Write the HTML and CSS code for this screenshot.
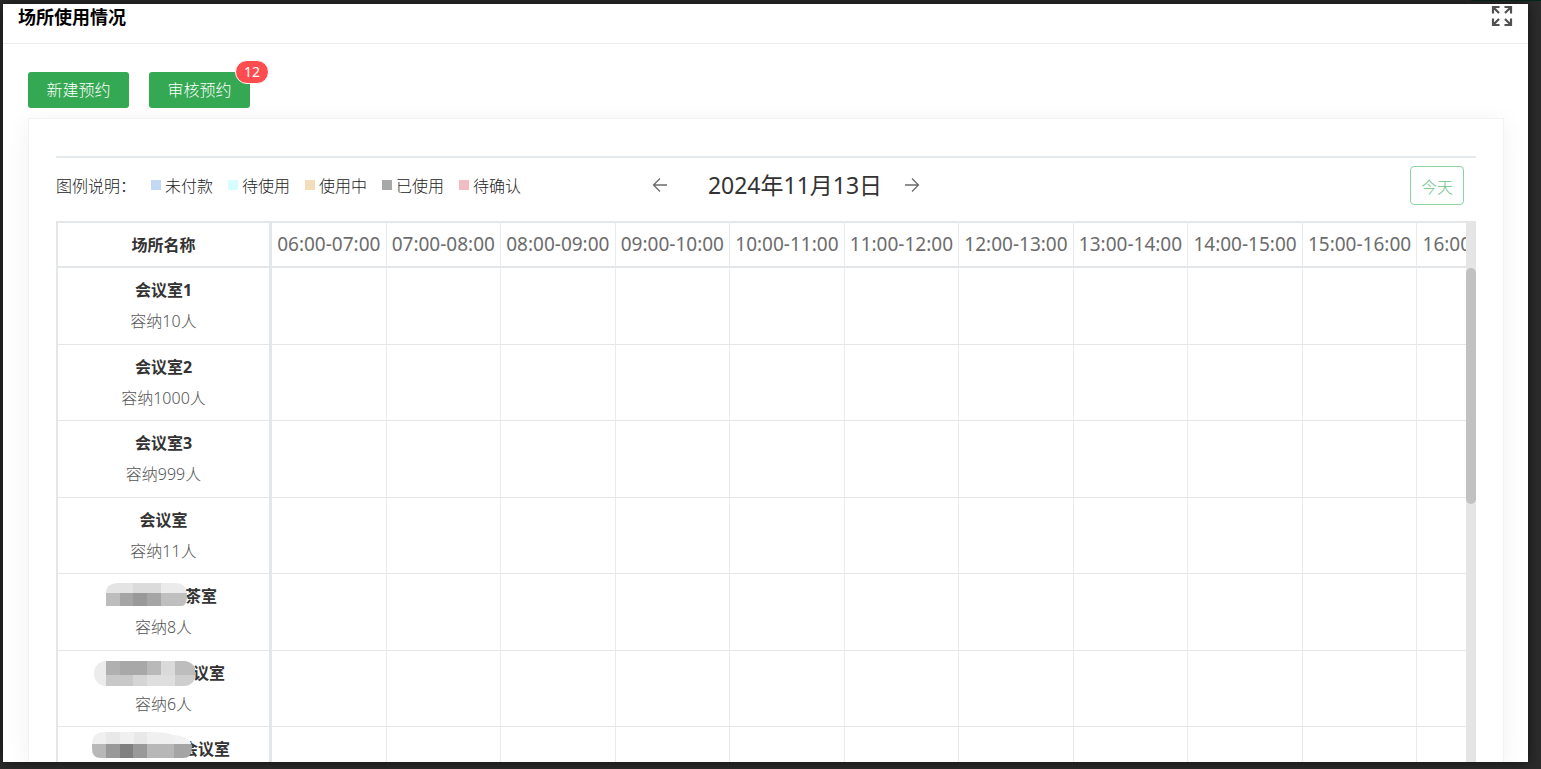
FILE: index.html
```html
<!DOCTYPE html>
<html lang="zh-CN">
<head>
<meta charset="utf-8">
<title>场所使用情况</title>
<link rel="stylesheet" href="styles.css">
</head>
<body>
<main class="dialog">
  <header class="dialog-head">
    <h1 class="dialog-title">场所使用情况</h1>
    <button class="icon-btn" type="button" aria-label="全屏">
      <svg width="22" height="22" viewBox="0 0 22 22" fill="none" stroke="#505050" stroke-width="2.2">
        <path d="M8.500 2H2V8.500M2 2L8 8M13.500 2H20V8.500M20 2L14 8M8.500 20H2V13.500M2 20L8 14M13.500 20H20V13.500M20 20L14 14"/>
      </svg>
    </button>
  </header>
  <div class="content">
    <div class="actions">
      <button class="btn" type="button">新建预约</button>
      <button class="btn" type="button">审核预约<span class="badge">12</span></button>
    </div>
    <section class="card">
      <div class="toolbar">
        <div class="legend">
          <span class="legend-label">图例说明：</span>
          <span class="legend-item"><i class="swatch unpaid"></i>未付款</span>
          <span class="legend-item"><i class="swatch pending"></i>待使用</span>
          <span class="legend-item"><i class="swatch active"></i>使用中</span>
          <span class="legend-item"><i class="swatch used"></i>已使用</span>
          <span class="legend-item"><i class="swatch confirm"></i>待确认</span>
        </div>
        <div class="date-nav">
          <button class="icon-btn" type="button" aria-label="前一天">
            <svg width="16" height="16" viewBox="0 0 16 16" fill="none" stroke="#6b6b6b" stroke-width="1.3"><path d="M15 8H2M8 1.5L1.5 8L8 14.5"/></svg>
          </button>
          <time class="date" datetime="2024-11-13">2024年11月13日</time>
          <button class="icon-btn" type="button" aria-label="后一天">
            <svg width="16" height="16" viewBox="0 0 16 16" fill="none" stroke="#6b6b6b" stroke-width="1.3"><path d="M1 8H14M8 1.5L14.5 8L8 14.5"/></svg>
          </button>
        </div>
        <button class="today" type="button">今天</button>
      </div>
      <div class="schedule">
        <div class="viewport">
          <table class="grid">
            <colgroup><col class="name-col"><col span="11"></colgroup>
            <thead>
              <tr><th scope="col">场所名称</th><th scope="col">06:00-07:00</th><th scope="col">07:00-08:00</th><th scope="col">08:00-09:00</th><th scope="col">09:00-10:00</th><th scope="col">10:00-11:00</th><th scope="col">11:00-12:00</th><th scope="col">12:00-13:00</th><th scope="col">13:00-14:00</th><th scope="col">14:00-15:00</th><th scope="col">15:00-16:00</th><th scope="col">16:00-17:00</th></tr>
            </thead>
            <tbody>
              <tr><th scope="row"><div class="room">会议室1</div><div class="capacity">容纳10人</div></th><td></td><td></td><td></td><td></td><td></td><td></td><td></td><td></td><td></td><td></td><td></td></tr>
              <tr><th scope="row"><div class="room">会议室2</div><div class="capacity">容纳1000人</div></th><td></td><td></td><td></td><td></td><td></td><td></td><td></td><td></td><td></td><td></td><td></td></tr>
              <tr><th scope="row"><div class="room">会议室3</div><div class="capacity">容纳999人</div></th><td></td><td></td><td></td><td></td><td></td><td></td><td></td><td></td><td></td><td></td><td></td></tr>
              <tr><th scope="row"><div class="room">会议室</div><div class="capacity">容纳11人</div></th><td></td><td></td><td></td><td></td><td></td><td></td><td></td><td></td><td></td><td></td><td></td></tr>
              <tr><th scope="row"><div class="room"><svg class="mask mask-a" width="82" height="31" viewBox="0 0 82 31">
                <clipPath id="clip-a"><path d="M1 25V12Q1 2 14 2H70Q82 2 82 15Q82 25 76 25Z"/></clipPath>
                <g clip-path="url(#clip-a)"><path fill="#e4e4e4" d="M0 2h28v10H0z"/><path fill="#dbdbdb" d="M28 2h28v10H28z"/><path fill="#ebebeb" d="M56 2h26v10H56z"/><path fill="#bdbdbd" d="M0 12h15v13H0z"/><path fill="#a5a5a5" d="M15 12h13v13H15z"/><path fill="#999" d="M28 12h14v13H28z"/><path fill="#a5a5a5" d="M42 12h14v13H42z"/><path fill="#bfbfbf" d="M56 12h26v13H56z"/></g></svg>茶室</div><div class="capacity">容纳8人</div></th><td></td><td></td><td></td><td></td><td></td><td></td><td></td><td></td><td></td><td></td><td></td></tr>
              <tr><th scope="row"><div class="room"><svg class="mask mask-b" width="101" height="31" viewBox="0 0 101 31">
                <clipPath id="clip-b"><rect y="3" width="102" height="25" rx="12"/></clipPath>
                <g clip-path="url(#clip-b)"><path fill="#ececec" d="M0 3h12v25H0z"/><path fill="#b0b0b0" d="M12 3h14v14H12z"/><path fill="#a8a8a8" d="M26 3h27v14H26z"/><path fill="#b9b9b9" d="M53 3h14v14H53z"/><path fill="#dadada" d="M67 3h14v14H67z"/><path fill="#bdbdbd" d="M81 3h20v14H81z"/><path fill="#c8c8c8" d="M12 17h27v11H12z"/><path fill="#d5d5d5" d="M39 17h14v11H39z"/><path fill="#dedede" d="M53 17h28v11H53z"/><path fill="#cecece" d="M81 17h20v11H81z"/></g></svg>议室</div><div class="capacity">容纳6人</div></th><td></td><td></td><td></td><td></td><td></td><td></td><td></td><td></td><td></td><td></td><td></td></tr>
              <tr><th scope="row"><div class="room"><svg class="mask mask-c" width="100" height="31" viewBox="0 0 100 31">
                <clipPath id="clip-c"><path d="M0 14V10Q0 -2 13 -2H60Q74 -2 81 1Q100 2 100 14Q100 24 91 24H9Q0 24 0 15Z"/></clipPath>
                <g clip-path="url(#clip-c)"><path fill="#f0f0f0" d="M0-2h82v12H0z"/><path fill="#e8e8e8" d="M14-2h14v12H14zM42-2h13v12H42z"/><path fill="#f2f2f2" d="M82-2h18v12H82z"/><path fill="#b8b8b8" d="M0 10h14v14H0z"/><path fill="#999" d="M14 10h14v14H14z"/><path fill="#808080" d="M28 10h13v14H28z"/><path fill="#999" d="M41 10h14v14H41z"/><path fill="#b7b7b7" d="M55 10h27v14H55z"/><path fill="#a5a5a5" d="M82 10h18v14H82z"/></g></svg>会议室</div><div class="capacity"></div></th><td></td><td></td><td></td><td></td><td></td><td></td><td></td><td></td><td></td><td></td><td></td></tr>
            </tbody>
          </table>
        </div>
        <div class="rail"><div class="thumb"></div></div>
      </div>
    </section>
  </div>
</main>
</body>
</html>
```

FILE: styles.css
```css
* { box-sizing: border-box; }

body {
  margin: 0;
  height: 100vh;
  padding: 4px 13px 7px 3px;
  display: flex;
  overflow: hidden;
  background: linear-gradient(#03291c, #03291c) right top / 70px 1px no-repeat #2c2c2c;
  font-family: "Noto Sans", "Noto Sans CJK SC", sans-serif;
  font-size: 16px;
  color: #333;
}

button { font: inherit; cursor: pointer; }

.dialog {
  flex: 1;
  min-width: 0;
  display: flex;
  flex-direction: column;
  overflow: hidden;
  background: #fff;
  box-shadow: 0 0 12px #111;
}

.dialog-head {
  flex: none;
  display: flex;
  justify-content: space-between;
  align-items: flex-start;
  height: 40px;
  padding: 1px 15px 0 15px;
  border-bottom: 1px solid #eee;
}

.dialog-title {
  margin: 0;
  font-size: 18px;
  line-height: 25px;
  font-weight: 700;
  color: #000;
}

.icon-btn {
  display: flex;
  padding: 0;
  border: 0;
  background: none;
}

.content {
  flex: 1;
  min-height: 0;
  display: flex;
  flex-direction: column;
  gap: 10px;
  padding: 28px 24px 0 25px;
}

.actions { display: flex; gap: 20px; }

.btn {
  position: relative;
  height: 36px;
  min-width: 101px;
  padding: 0 16px 2px;
  border: 0;
  border-radius: 3px;
  background: #35a853;
  color: #fff;
  font-weight: 300;
}

.badge {
  position: absolute;
  top: -12px;
  right: -19px;
  min-width: 34px;
  padding: 0 8px;
  border: 1px solid #fff;
  border-radius: 12px;
  background: #ff4d4f;
  font-size: 14px;
  font-weight: 400;
  line-height: 22px;
}

.card {
  flex: 1;
  min-height: 0;
  display: flex;
  flex-direction: column;
  padding: 37px 27px 0;
  border: 1px solid #f2f2f2;
  border-bottom: 0;
  box-shadow: 0 4px 24px rgba(0, 0, 0, .06);
}

.toolbar {
  flex: none;
  display: grid;
  grid-template-columns: 1fr auto 1fr;
  align-items: center;
  height: 65px;
  padding: 0 12px 8px 0;
  border-top: 2px solid #e4e9ed;
}

.legend {
  display: flex;
  gap: 15px;
  padding-bottom: 2px;
  font-weight: 300;
  color: #222;
  white-space: nowrap;
}

.legend-item { display: flex; align-items: center; gap: 4px; }

.swatch { width: 10px; height: 10px; }
.unpaid { background: #c2d8f3; }
.pending { background: #d7fdff; }
.active { background: #f3dcba; }
.used { background: #a8a8a8; }
.confirm { background: #f2bcc5; }

.date-nav {
  display: flex;
  align-items: center;
  padding: 0 0 2px 52px;
}

.date {
  margin: 0 22px 0 40px;
  font-size: 23px;
  line-height: 32px;
}

.today {
  justify-self: end;
  height: 39px;
  padding: 0 10px;
  border: 1px solid #8bd3a0;
  border-radius: 4px;
  background: #fff;
  color: #6cc485;
  font-weight: 300;
}

.schedule { flex: 1; min-height: 0; display: flex; }

.viewport { flex: 1; min-width: 0; overflow: hidden; }

.grid {
  table-layout: fixed;
  width: 1476px;
  border-collapse: separate;
  border-spacing: 0;
}

.name-col { width: 216px; }

.grid th, .grid td {
  padding: 0;
  border-right: 1px solid #e9ecef;
  border-bottom: 1px solid #e4e7ea;
}

.grid thead th {
  height: 47px;
  padding-bottom: 1px;
  border-top: 2px solid #e4e7ea;
  border-bottom-width: 2px;
  font-size: 19px;
  font-weight: 400;
  color: #6c6c6c;
}

.grid tr > :first-child {
  border-left: 2px solid #e4e7ea;
  border-right: 3px solid #e4e7ea;
}

.grid thead tr > :first-child {
  font-size: 16px;
  font-weight: 700;
  color: #333;
}

.grid tbody th { padding: 7px 0; }
.grid tbody tr:nth-child(even) th { padding-bottom: 6px; }

.room, .capacity {
  display: flex;
  justify-content: center;
  height: 31px;
  line-height: 31px;
}

.room { font-weight: 700; color: #333; }
.capacity { font-weight: 300; color: #555; }

.mask { position: relative; z-index: 1; flex: none; overflow: visible; }
.mask-a { margin: 0 -2px 0 -5px; }
.mask-b { margin: 0 -2px 0 -8px; }
.mask-c { margin: 0 -10px 0 -5px; }

.rail {
  flex: none;
  width: 10px;
  padding-top: 47px;
  background: #e5e5e5;
}

.thumb {
  height: 236px;
  border-radius: 5px;
  background: #c1c1c1;
}
```
